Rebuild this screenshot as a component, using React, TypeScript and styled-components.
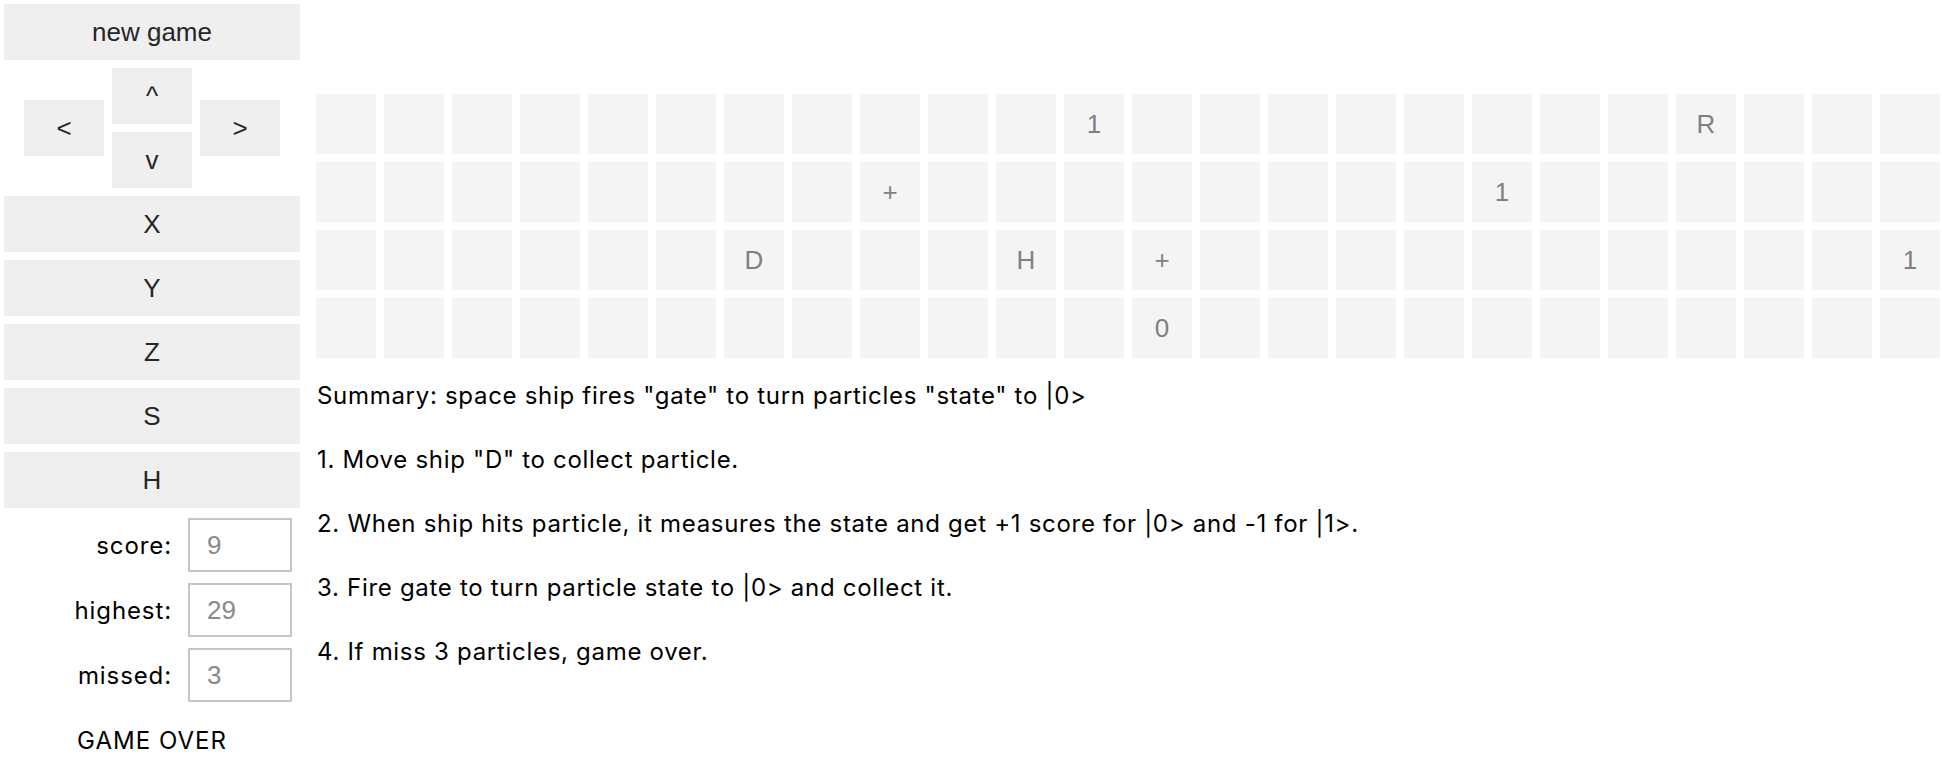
import React from "react";
import styled, { createGlobalStyle } from "styled-components";

const Global = createGlobalStyle`
  html, body { margin: 0; padding: 0; background: #fff; }
  body { font-family: Inter, "Noto Sans", sans-serif; overflow: hidden; }
`;

const Page = styled.div`
  display: flex;
  align-items: flex-start;
  width: 1942px;
`;

const Side = styled.div`
  width: 296px;
  padding: 4px;
  display: flex;
  flex-direction: column;
  gap: 8px;
`;

const Btn = styled.button`
  height: 56px;
  border: none;
  margin: 0;
  padding: 0;
  background: #efefef;
  color: #262626;
  font-family: "Liberation Sans", Arial, sans-serif;
  font-size: 26px;
  cursor: pointer;
`;

const Pad = styled.div`
  display: grid;
  grid-template-columns: repeat(3, 80px);
  grid-template-rows: 32px 24px 8px 24px 32px;
  column-gap: 8px;
  justify-content: center;
`;

const PadBtn = styled(Btn)<{ $col: number; $row: string }>`
  height: 56px;
  grid-column: ${(p) => p.$col};
  grid-row: ${(p) => p.$row};
`;

const Stats = styled.div`
  display: grid;
  grid-template-columns: 1fr 104px;
  column-gap: 16px;
  row-gap: 11px;
  padding-right: 8px;
  margin-top: 2px;
  align-items: center;
`;

const Label = styled.label`
  text-align: right;
  font-family: Inter, sans-serif;
  font-size: 24px;
  letter-spacing: 0.9px;
  color: #000;
`;

const Field = styled.input`
  box-sizing: border-box;
  width: 104px;
  height: 54px;
  border: 2px solid #c6c6c6;
  padding: 0 0 0 17px;
  background: #fff;
  color: #8a8a8a;
  font-family: "Liberation Sans", Arial, sans-serif;
  font-size: 26px;
  outline: none;
`;

const Status = styled.div`
  text-align: center;
  font-family: Inter, sans-serif;
  font-size: 24px;
  letter-spacing: 1px;
  color: #000;
  margin-top: 16px;
`;

const Main = styled.div`
  margin-left: 12px;
  padding-top: 94px;
`;

const Board = styled.div`
  display: grid;
  grid-template-columns: repeat(24, 60px);
  grid-auto-rows: 60px;
  gap: 8px;
`;

const Cell = styled.div`
  background: #f4f4f4;
  display: flex;
  align-items: center;
  justify-content: center;
  color: #808080;
  font-family: "Liberation Sans", Arial, sans-serif;
  font-size: 26px;
`;

const Help = styled.div`
  margin-top: 26px;
  display: flex;
  flex-direction: column;
  gap: 40px;
  padding-left: 1px;
`;

const Line = styled.p`
  margin: 0;
  font-family: Inter, sans-serif;
  font-size: 24px;
  letter-spacing: 0.7px;
  line-height: 24px;
  color: #000;
`;

const marks: Record<string, string> = {
  "0-11": "1",
  "0-20": "R",
  "1-8": "+",
  "1-17": "1",
  "2-6": "D",
  "2-10": "H",
  "2-12": "+",
  "2-23": "1",
  "3-12": "0",
};

export default function App() {
  const rows = [0, 1, 2, 3];
  const cols = Array.from({ length: 24 }, (_, i) => i);
  return (
    <>
      <Global />
      <Page>
        <Side>
          <Btn>new game</Btn>
          <Pad>
            <PadBtn $col={2} $row="1 / 3">^</PadBtn>
            <PadBtn $col={1} $row="2 / 5">&lt;</PadBtn>
            <PadBtn $col={3} $row="2 / 5">&gt;</PadBtn>
            <PadBtn $col={2} $row="4 / 6">v</PadBtn>
          </Pad>
          <Btn>X</Btn>
          <Btn>Y</Btn>
          <Btn>Z</Btn>
          <Btn>S</Btn>
          <Btn>H</Btn>
          <Stats>
            <Label>score:</Label>
            <Field disabled value="9" readOnly />
            <Label>highest:</Label>
            <Field disabled value="29" readOnly />
            <Label>missed:</Label>
            <Field disabled value="3" readOnly />
          </Stats>
          <Status>GAME OVER</Status>
        </Side>
        <Main>
          <Board>
            {rows.map((r) =>
              cols.map((c) => <Cell key={`${r}-${c}`}>{marks[`${r}-${c}`] ?? ""}</Cell>)
            )}
          </Board>
          <Help>
            <Line>Summary: space ship fires "gate" to turn particles "state" to |0&gt;</Line>
            <Line>1. Move ship "D" to collect particle.</Line>
            <Line>2. When ship hits particle, it measures the state and get +1 score for |0&gt; and -1 for |1&gt;.</Line>
            <Line>3. Fire gate to turn particle state to |0&gt; and collect it.</Line>
            <Line>4. If miss 3 particles, game over.</Line>
          </Help>
        </Main>
      </Page>
    </>
  );
}
